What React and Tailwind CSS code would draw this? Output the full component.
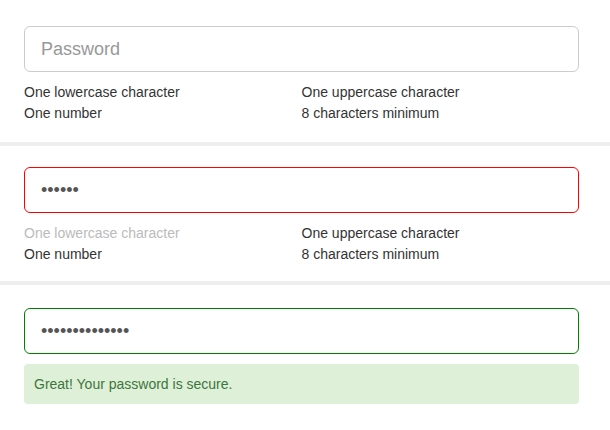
import React from 'react';

const rules = ['One lowercase character', 'One uppercase character', 'One number', '8 characters minimum'];

function Rules({ faded = [] }) {
  return (
    <ul className="mt-[10px] grid grid-cols-2 text-[14px] leading-[21px] text-[#333]">
      {rules.map((rule) => (
        <li key={rule} className={faded.includes(rule) ? 'text-[#bbb]' : ''}>
          {rule}
        </li>
      ))}
    </ul>
  );
}

function PasswordInput({ value, border }) {
  return (
    <input
      type="password"
      placeholder="Password"
      defaultValue={value}
      readOnly
      className={`block w-full h-[46px] px-[16px] rounded-[6px] border bg-white text-[18px] text-[#555] placeholder:text-[#999] outline-none ${border}`}
      style={{ fontFamily: '"Liberation Sans", Arial, sans-serif' }}
    />
  );
}

export default function App() {
  return (
    <div className="w-[610px] h-[430px] bg-white font-['Liberation_Sans',Arial,sans-serif]">
      <section className="px-[24px] pl-[24px] pr-[31px] pt-[26px] pb-[18px]">
        <PasswordInput value="" border="border-[#ccc]" />
        <Rules />
      </section>
      <div className="h-[4px] bg-[#eeeeee]" />
      <section className="pl-[24px] pr-[31px] pt-[21px] pb-[16px]">
        <PasswordInput value="abcdef" border="border-[#ff0000]" />
        <Rules faded={['One lowercase character']} />
      </section>
      <div className="h-[4px] bg-[#eeeeee]" />
      <section className="pl-[24px] pr-[31px] pt-[23px]">
        <PasswordInput value="Abcdefgh123456" border="border-[#008000]" />
        <div className="mt-[10px] h-[40px] px-[10px] flex items-center rounded-[4px] bg-[#dff0d8] text-[14px] text-[#3c763d]">
          Great! Your password is secure.
        </div>
      </section>
    </div>
  );
}
